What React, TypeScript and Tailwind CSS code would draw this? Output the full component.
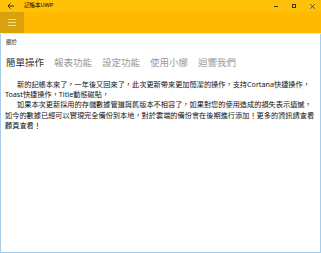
import React from "react";

const cjk = { fontFamily: '"Noto Sans", "Noto Sans CJK TC", sans-serif' };

export default function App() {
  const tabs = ["簡單操作", "報表功能", "設定功能", "使用小娜", "迴響我們"];
  return (
    <div className="w-[321px] h-[253px] flex flex-col bg-white overflow-hidden" style={cjk}>
      {/* title bar */}
      <div className="h-[12px] bg-[#ffc107] flex items-center shrink-0">
        <div className="w-[20px] flex justify-center pl-[1px]">
          <svg width="7" height="6" viewBox="0 0 7 6" fill="none" stroke="#222" strokeWidth="0.9">
            <path d="M7 3H1M3.5 0.5L1 3l2.5 2.5" />
          </svg>
        </div>
        <span className="text-[5.5px] leading-none text-black ml-[4px]">記帳本UWP</span>
        <div className="flex-1" />
        <div className="flex items-center">
          <div className="w-[18px] flex justify-center">
            <div className="w-[4px] h-[0.8px] bg-[#333]" />
          </div>
          <div className="w-[18px] flex justify-center">
            <div className="w-[4px] h-[4px] border-[0.8px] border-[#333]" />
          </div>
          <div className="w-[18px] flex justify-center">
            <svg width="5" height="5" viewBox="0 0 5 5" stroke="#333" strokeWidth="0.8">
              <path d="M0.3 0.3L4.7 4.7M4.7 0.3L0.3 4.7" />
            </svg>
          </div>
        </div>
      </div>
      {/* header */}
      <div className="h-[21px] bg-[#ffb900] flex shrink-0">
        <div className="w-[24px] h-full bg-[#d9a10b] flex flex-col items-center justify-center gap-[2px]">
          <div className="w-[8px] h-[1px] bg-[#f2dca6]" />
          <div className="w-[8px] h-[1px] bg-[#f2dca6]" />
          <div className="w-[8px] h-[1px] bg-[#f2dca6]" />
        </div>
      </div>
      <div className="h-[1px] bg-[#ffe9a8] shrink-0" />
      {/* content */}
      <div className="flex-1 border-x border-b border-[#a7cdeb] pl-[4px] pr-[2px]">
        <div className="text-[5.5px] leading-none text-[#222] mt-[6px] ml-[1px]">關於</div>
        <div className="flex gap-[10px] mt-[12px] ml-[1px]">
          {tabs.map((t, i) => (
            <span
              key={t}
              className={
                "text-[9.5px] leading-none " + (i === 0 ? "text-[#333]" : "text-[#9a9a9a]")
              }
            >
              {t}
            </span>
          ))}
        </div>
        <div className="mt-[12px] text-[7.2px] leading-[10.2px] text-[#111]">
          <p className="indent-[12px]">
            新的記帳本來了，一年後又回來了，此次更新帶來更加簡潔的操作，支持Cortana快捷操作，Toast快捷操作，Title動態磁貼，
          </p>
          <p className="indent-[12px]">
            如果本次更新採用的存儲數據管道與舊版本不相容了，如果對您的使用造成的損失表示遺憾，如今的數據已經可以實現完全備份到本地，對於雲端的備份會在後期進行添加！更多的資訊請查看顧頁查看！
          </p>
        </div>
      </div>
    </div>
  );
}
